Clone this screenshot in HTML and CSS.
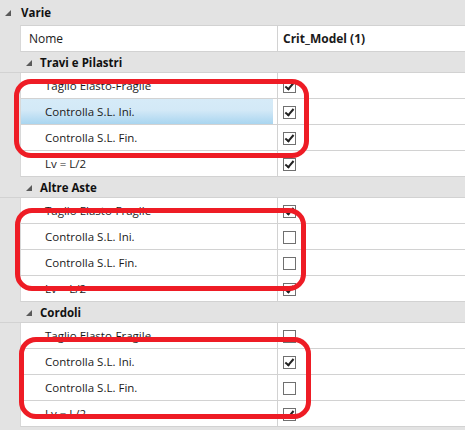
FILE: index.html
```html
<!DOCTYPE html>
<html>
<head>
<meta charset="utf-8">
<link rel="stylesheet" href="styles.css">
</head>
<body>
<div class="grid">
  <div class="cat"><span class="tri"></span><span class="cat-title">Varie</span></div>
  <div class="head row">
    <div class="name">Nome</div>
    <div class="val"><b>Crit_Model (1)</b></div>
  </div>

  <div class="group"><span class="tri"></span><span class="g-title">Travi e Pilastri</span></div>
  <div class="row"><div class="name">Taglio Elasto-Fragile</div><div class="val"><span class="cb on"></span></div></div>
  <div class="row"><div class="name sel">Controlla S.L. Ini.</div><div class="val"><span class="cb on"></span></div></div>
  <div class="row"><div class="name">Controlla S.L. Fin.</div><div class="val"><span class="cb on"></span></div></div>
  <div class="row"><div class="name">Lv = L/2</div><div class="val"><span class="cb on"></span></div></div>

  <div class="group"><span class="tri"></span><span class="g-title">Altre Aste</span></div>
  <div class="row"><div class="name">Taglio Elasto-Fragile</div><div class="val"><span class="cb on"></span></div></div>
  <div class="row"><div class="name">Controlla S.L. Ini.</div><div class="val"><span class="cb"></span></div></div>
  <div class="row"><div class="name">Controlla S.L. Fin.</div><div class="val"><span class="cb"></span></div></div>
  <div class="row"><div class="name">Lv = L/2</div><div class="val"><span class="cb on"></span></div></div>

  <div class="group"><span class="tri"></span><span class="g-title">Cordoli</span></div>
  <div class="row"><div class="name">Taglio Elasto-Fragile</div><div class="val"><span class="cb"></span></div></div>
  <div class="row"><div class="name">Controlla S.L. Ini.</div><div class="val"><span class="cb on"></span></div></div>
  <div class="row"><div class="name">Controlla S.L. Fin.</div><div class="val"><span class="cb"></span></div></div>
  <div class="row"><div class="name">Lv = L/2</div><div class="val"><span class="cb on"></span></div></div>
</div>

<div class="mark m1"></div>
<div class="mark m2"></div>
<div class="mark m3"></div>
</body>
</html>
```

FILE: styles.css
```css
html, body {
  margin: 0;
  padding: 0;
}
body {
  width: 465px;
  height: 430px;
  overflow: hidden;
  background: #e3e3e3;
  font-family: "Open Sans", "Noto Sans", sans-serif;
  font-size: 11.5px;
  color: #1a1a1a;
  position: relative;
}
.grid {
  display: flex;
  flex-direction: column;
}
.cat {
  height: 25px;
  display: flex;
  align-items: center;
  padding-left: 5px;
}
.cat-title {
  font-weight: bold;
  margin-left: 10px;
  color: #111;
}
.tri {
  width: 0;
  height: 0;
  border-style: solid;
  border-width: 0 0 6px 6px;
  border-color: transparent transparent #5a5a5a transparent;
  margin-top: 1px;
}
.row {
  display: flex;
  height: 25px;
  margin-left: 20px;
  border-left: 1px solid #d8d8d8;
  border-bottom: 1px solid #d2d2d2;
  background: #fff;
}
.head {
  border-top: 1px solid #d2d2d2;
}
.name {
  width: 257px;
  box-sizing: border-box;
  padding-left: 24px;
  display: flex;
  align-items: center;
  border-right: 1px solid #d2d2d2;
}
.head .name {
  padding-left: 8px;
  font-size: 12px;
}
.head .val b {
  font-size: 12px;
}
.name.sel {
  background: linear-gradient(to bottom, #d6ebf8 0%, #d3e9f7 45%, #a9d5f0 100%);
  box-shadow: inset -4px 0 0 #fff;
}
.val {
  flex: 1;
  display: flex;
  align-items: center;
  padding-left: 5px;
}
.group {
  height: 20px;
  display: flex;
  align-items: center;
  padding-left: 26px;
  border-bottom: 1px solid #d2d2d2;
  background: #e3e3e3;
}
.g-title {
  font-weight: bold;
  margin-left: 8px;
  color: #111;
}
.cb {
  width: 11px;
  height: 11px;
  border: 1px solid #707070;
  background: #fff;
  position: relative;
  margin-top: 1px;
}
.cb.on::after {
  content: "";
  position: absolute;
  left: 3px;
  top: 0px;
  width: 3px;
  height: 7px;
  border-right: 2px solid #222;
  border-bottom: 2px solid #222;
  transform: rotate(40deg);
}
.mark {
  position: absolute;
  border: 5px solid #ee1c25;
  border-radius: 17px;
  box-sizing: border-box;
}
.m1 { left: 14px; top: 79px; width: 295px; height: 79px; }
.m2 { left: 15px; top: 208px; width: 291px; height: 83px; }
.m3 { left: 19px; top: 337px; width: 292px; height: 82px; }
```
